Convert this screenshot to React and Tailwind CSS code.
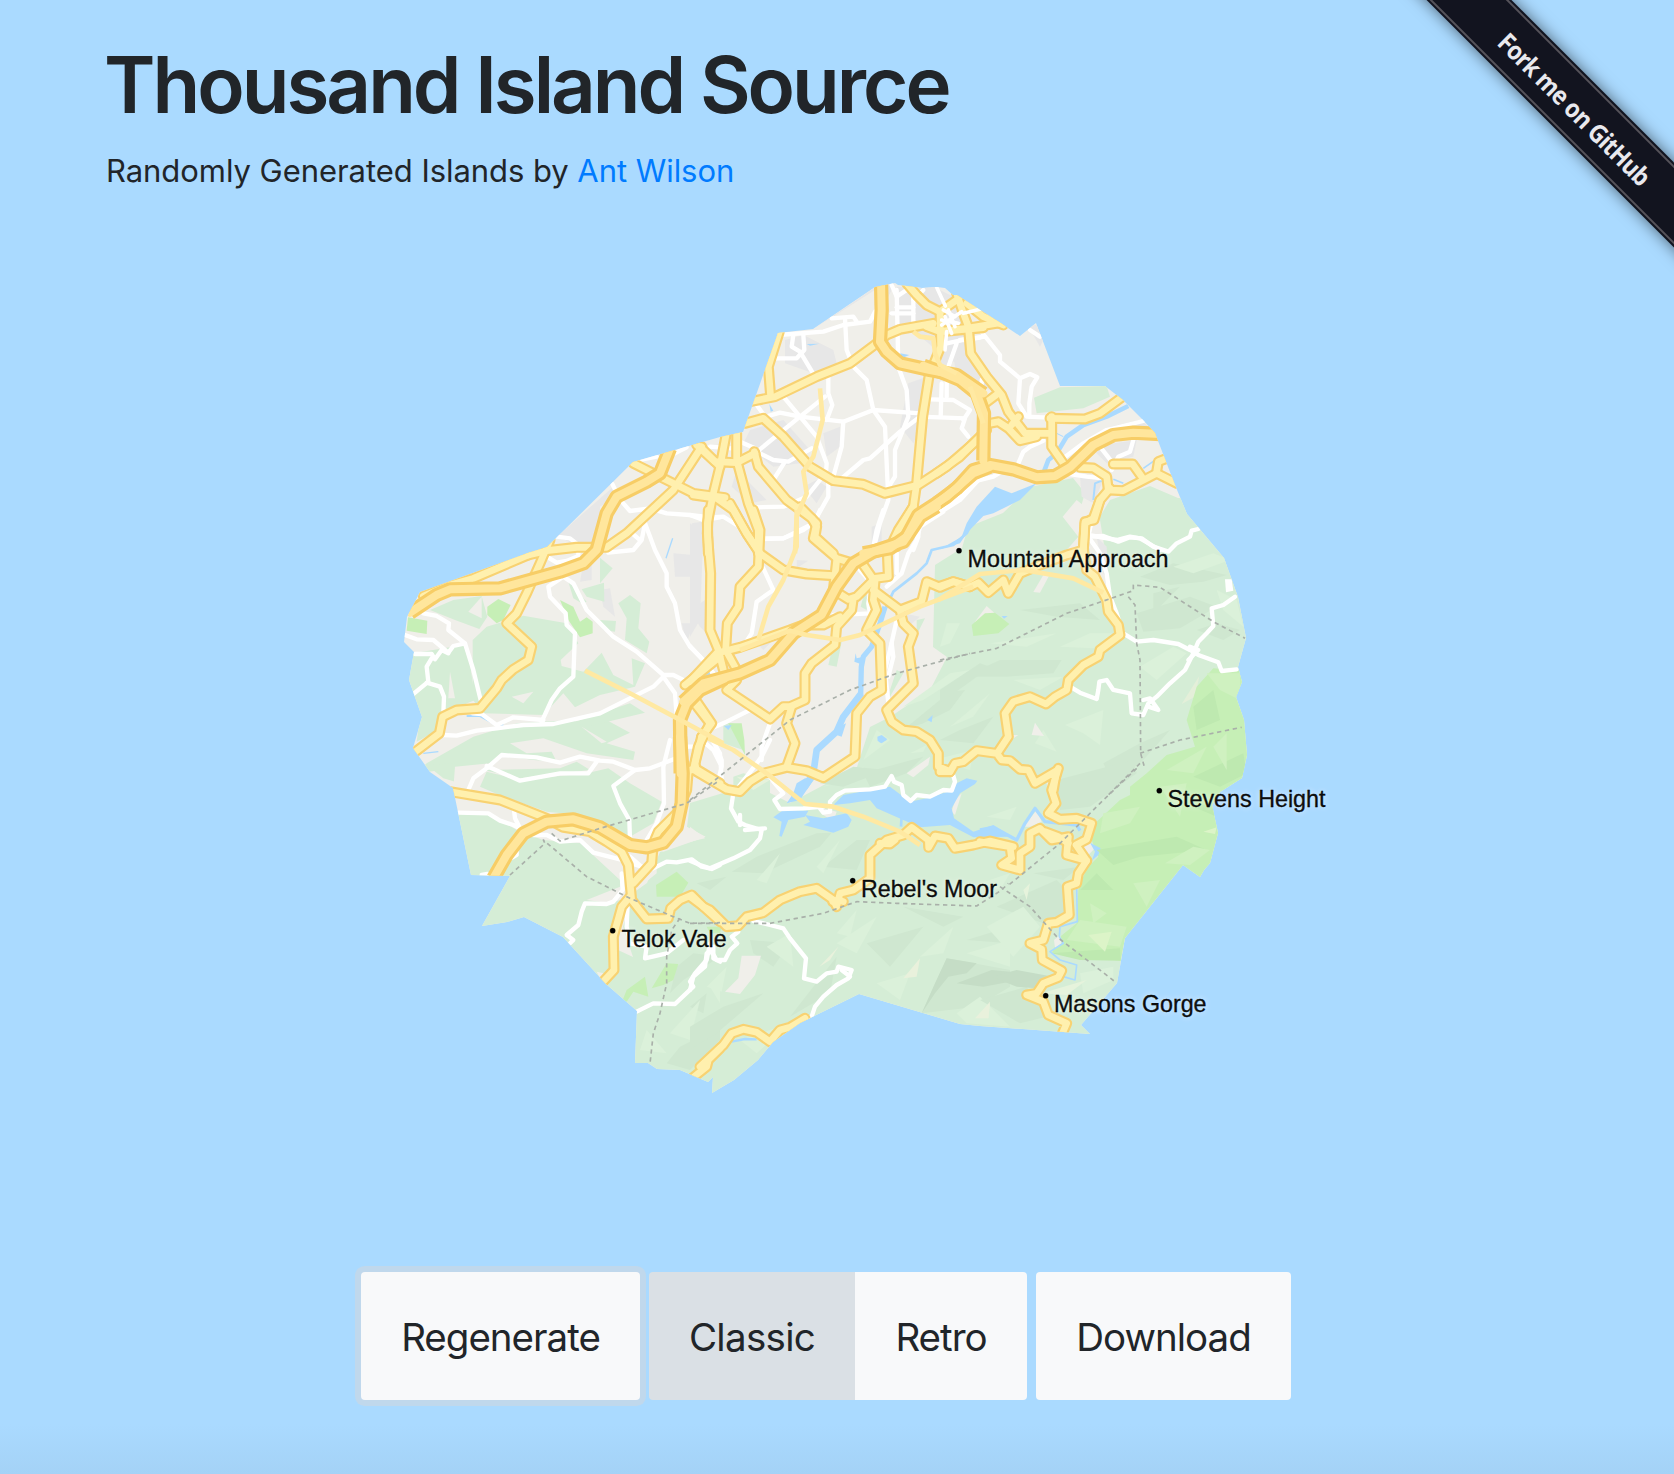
import React from "react";

// The map is drawn in sheets. Each sheet has an origin on the page and
// its own coordinates, three units to a pixel.
const ORIGIN = {
  A: "translate(700 270) scale(.33333)",
  B: "translate(940 270) scale(.33333)",
  C: "translate(400 430) scale(.33333)",
  D: "translate(690 510) scale(.33333)",
  E: "translate(940 500) scale(.33333)",
  F: "translate(400 740) scale(.33333)",
  G: "translate(690 740) scale(.33333)",
  H: "translate(980 740) scale(.33333)",
};

const COAST =
  "778,333 813,329 875,287 895,283 898,285 907,286 922,288 937,287 945,288 953,295 957,295 1002,324 1020,336 1036,323 1060,386 1105,386 1123,400 1143,420 1155,433 1175,485 1187,514 1198,527 1224,558 1238,597 1246,638 1238,667 1242,682 1236,697 1244,720 1247,755 1242,778 1220,792 1212,805 1218,833 1210,863 1204,870 1200,877 1183,865 1125,938 1117,983 1081,1025 1090,1034 980,1026 960,1024 859,994 800,1023 773,1042 758,1060 734,1080 712,1093 713,1077 708,1082 680,1070 657,1069 648,1063 635,1063 637,1011 606,984 563,937 524,917 507,922 482,926 510,876 471,875 453,788 430,772 413,748 422,717 409,680 414,652 404,642 407,617 420,592 528,553 547,547 633,462 720,437 743,432";

const GREEN_MAIN =
  "1260,500 1178,498 1150,486 1110,500 1093,528 1077,520 1085,493 1073,478 1030,487 1003,513 968,527 962,548 935,565 933,647 947,657 930,690 890,717 870,727 857,767 820,787 790,803 770,793 733,790 690,803 687,827 705,837 660,852 647,883 633,893 623,927 633,957 618,950 620,900 620,880 580,843 543,840 517,830 490,815 440,813 440,1110 1260,1110";

const URBAN = "#f0efea";
const GREEN = "#d5edd6";
const PARK = "#c6efb6";
const WATER = "#aadaff";
const GREY = "#e7e7e7";

const LAND = {
  A: [
    [GREY, "340,178 525,52 585,40 560,90 460,135 400,140"],
    [URBAN, "340,178 525,60 520,150 380,185"],
    [GREY, "255,210 310,195 400,240 410,280 340,310 255,280"],
    [GREY, "150,480 250,450 330,540 300,580 220,590 130,520"],
    [GREY, "370,490 420,470 420,530 380,560"],
    [GREY, "625,340 680,320 665,470 640,520 600,470"],
    [GREY, "110,600 200,690 150,700 95,650"],
    [GREY, "310,650 350,630 380,650 350,700"],
    [GREY, "590,50 700,50 770,90 720,250 650,190 590,180"],
    [GREY, "750,220 790,210 840,340 770,310"],
    [WATER, "320,222 358,221 330,227"],
    [WATER, "600,250 628,255 605,265"],
    [WATER, "208,402 220,422 212,425"],
  ],
  B: [
    [GREY, "0,60 60,90 80,250 0,300"],
    [GREY, "80,260 130,310 150,360 90,330"],
    [GREY, "260,160 290,165 310,210 300,230"],
    [GREY, "450,530 590,510 580,560 500,580"],
    [GREY, "510,470 600,450 640,480"],
    [GREY, "420,620 490,630 460,700 425,680"],
    [GREEN, "282,383 360,352 500,348 510,380 430,415 290,430"],
    [WATER, "165,650 215,670 290,640 240,690 160,730 130,738 80,790 60,820 0,838 65,800 80,760 110,710"],
  ],
  C: [
    [GREY, "470,320 640,170 670,220 600,250 590,350 520,340"],
    [URBAN, "600,230 660,190 700,240 640,320 600,340"],
    [GREY, "875,280 940,270 940,360 890,350"],
    [GREY, "820,370 880,375 870,440 825,440"],
    [GREY, "550,400 575,400 575,450 540,455"],
    [GREY, "600,480 630,475 645,560 610,530"],
    [GREY, "870,540 930,500 930,620 900,590"],
    [GREY, "845,580 880,580 860,640"],
    [GREEN, "90,540 160,510 245,498 262,560 238,597 165,570"],
    [URBAN, "205,545 245,500 245,565"],
    [GREEN, "218,630 260,590 370,557 500,580 535,640 482,690 485,708 550,725 605,668 640,735 700,765 695,685 735,700 705,770 600,795 525,832 490,790 430,855 330,852 250,850 215,805 218,750"],
    [GREEN, "40,670 190,645 210,700 225,810 130,850 105,905 50,935 60,860 20,760"],
    [URBAN, "150,725 165,805 145,805"],
    [URBAN, "335,800 400,785 370,820"],
    [GREEN, "655,520 690,495 722,520 715,595 748,635 740,670 675,630 680,565"],
    [GREEN, "600,383 638,415 600,460"],
    [GREEN, "545,478 612,458 613,515 560,500"],
    [GREEN, "505,455 560,515 545,520 520,505"],
    [GREEN, "600,570 648,573 645,605 610,600"],
    [GREEN, "50,1030 80,1000 220,920 350,880 520,870 605,940 620,935 520,875 610,865 690,908 620,940 705,965 700,990 560,970 430,925 330,940 380,970 455,965 470,995 400,990 300,975 250,1015 165,1015"],
    [GREEN, "525,875 690,820 735,848 560,890"],
    [PARK, "262,530 295,507 332,525 310,570 290,580 262,555"],
    [PARK, "24,562 82,572 80,612 20,602"],
    [PARK, "480,510 520,530 540,575 560,562 578,575 578,610 540,622 505,570"],
    [WATER, "915,722 930,720 928,745 912,742"],
  ],
  D: [
    [GREY, "0,40 40,70 30,330 0,380"],
    [GREY, "545,50 575,40 575,110 545,110"],
    [GREY, "320,150 355,152 320,175"],
    [GREY, "640,310 690,320 660,345"],
    [GREY, "190,390 260,380 220,420"],
    [GREEN, "430,400 455,395 440,470 415,465"],
    [GREEN, "680,330 705,325 680,375"],
    [GREEN, "520,260 530,245 530,300 512,290"],
    [GREEN, "600,540 620,480 640,490 600,560"],
    [GREEN, "100,640 130,640 160,720 100,700"],
    [GREEN, "130,800 160,790 240,810 240,850 130,850"],
    [PARK, "115,640 155,640 163,690 165,735"],
    [WATER, "102,648 125,645 115,660"],
    [WATER, "45,485 60,480 58,500 42,500"],
    [WATER, "497,430 500,445 520,440 520,465 493,455"],
    [WATER, "562,680 575,675 592,688 575,700 563,693"],
    [WATER, "712,630 728,615 725,637"],
    [WATER, "445,650 468,640 455,680 440,675"],
  ],
  E: [
    [URBAN, "410,0 435,20 470,0 490,120 510,290 470,250 440,110 415,110 368,50"],
    [GREY, "470,110 500,140 505,240 490,220"],
    [URBAN, "415,110 430,150 370,190 345,190"],
    [URBAN, "310,225 330,222 300,278 280,276"],
    [URBAN, "140,318 170,345 120,390 105,365"],
    [PARK, "95,375 135,340 165,338 208,372 175,400 100,408"],
    [WATER, "185,348 203,348 192,356"],
    [URBAN, "285,668 312,708 275,705"],
    [URBAN, "215,705 235,705 205,725"],
    [URBAN, "0,460 18,475 0,500"],
    ["#fff", "855,238 875,238 880,272 858,277"],
  ],
  F: [
    [GREEN, "240,140 260,95 360,120 560,100 625,85 690,130 785,185 760,250 690,290 620,260 540,225 440,215 310,170"],
    [GREEN, "80,75 165,70 165,125 130,115"],
    [GREEN, "250,90 480,85 530,65 570,90 360,115"],
    [URBAN, "165,80 270,70 220,130 200,160 160,145"],
    [URBAN, "660,300 770,290 770,400 720,440 690,380"],
    [URBAN, "860,260 917,290 790,335 770,330"],
    [URBAN, "560,480 660,440 660,480 630,490"],
    [PARK, "768,435 830,395 865,428 840,470 770,470"],
    [PARK, "668,780 680,750 735,710 745,770 700,755 680,785"],
    [PARK, "755,745 800,670 835,672 820,720 790,735"],
    [URBAN, "590,695 612,700 600,715"],
  ],
  G: [
    [URBAN, "0,260 45,295 0,305"],
    [URBAN, "650,100 720,50 715,75 670,112"],
    [URBAN, "155,647 213,647 195,705 150,762 105,755 145,715"],
    [URBAN, "380,200 440,215 430,245 400,225"],
    [URBAN, "795,180 815,160 795,225 785,215"],
    [PARK, "50,560 95,560 90,580 60,580"],
    ["#e5f2dc", "140,110 240,120 190,150"],
    ["#e9f1dc", "640,715 690,655 680,710"],
    ["#e9f1dc", "855,835 900,785 895,835"],
    ["#e9f1dc", "388,680 445,620 420,660"],
    [WATER, "310,160 320,130 345,115 375,115 350,150 330,180 290,190"],
    [WATER, "430,195 460,165 540,150 600,140 660,185 710,175 790,150 800,130 830,115 862,122 855,132 810,160 785,205 792,235 850,275 910,255 965,290 850,292 780,255 690,262 640,240 560,205 540,180 480,190"],
    [WATER, "345,225 400,235 470,220 485,240 475,260 430,278 340,255 360,245"],
    [WATER, "250,232 280,210 355,212 345,230 295,240 275,290 268,288 275,245"],
    [WATER, "565,0 590,0 570,8"],
  ],
  H: [
    [URBAN, "130,260 170,210 185,245 150,260"],
    [URBAN, "200,130 215,120 210,190"],
    [PARK, "645,20 620,-60 650,-160 700,-215 900,-200 900,150 720,430 435,595 422,662 215,640 240,590 290,550 295,450 320,385 355,350 335,300 350,245 420,180 450,165 450,140 500,100 560,45"],
    [URBAN, "310,320 330,308 345,325 325,345"],
    [WATER, "330,308 362,325 355,345 335,362 345,335"],
    [URBAN, "222,600 240,585 245,610 225,625"],
  ],
};

const DARK = "#cfe7d0";
const DARKER = "#c5ddc6";
const LIGHT = "#dbf1da";
const RELIEF = {
  D: [
    [DARK, "640,660 780,545 825,540 780,600 700,640"],
    [DARK, "520,790 700,740 650,790 540,830"],
    [LIGHT, "640,590 780,490 840,480 700,570"],
    [LIGHT, "520,750 560,660 600,690"],
    [LIGHT, "400,830 520,770 520,800"],
    [LIGHT, "660,730 710,705 700,725"],
  ],
  E: [
    [DARK, "70,530 180,480 365,480 340,520 200,530"],
    [DARK, "0,570 120,490 150,500 90,545 0,610"],
    [DARK, "590,340 750,290 830,320 720,385 610,395"],
    [DARK, "600,230 700,190 860,225 790,245 690,255"],
    [DARK, "490,790 600,730 690,690 610,780 520,850"],
    [DARK, "240,330 420,310 480,360 350,350"],
    [DARK, "640,280 720,260 640,340"],
    [DARK, "770,390 830,370 900,390 850,420"],
    [DARK, "0,720 60,690 160,650 100,730"],
    [LIGHT, "600,500 700,440 740,460 650,540"],
    [LIGHT, "375,675 490,630 480,735 430,700"],
    [LIGHT, "285,730 310,690 350,755"],
    [LIGHT, "20,370 60,370 30,430 0,440"],
    [LIGHT, "360,440 450,400 520,400 460,445"],
    [LIGHT, "150,430 350,400 260,440"],
    [LIGHT, "220,540 370,530 300,570"],
    [LIGHT, "700,200 820,160 870,180 760,220"],
    [LIGHT, "30,680 150,580 100,650"],
    [LIGHT, "830,270 890,300 910,380 850,330"],
    ["#e4efd9", "725,612 778,528 765,590"],
  ],
  F: [
    [DARK, "810,760 830,680 880,640 960,650 850,720"],
    [DARK, "840,920 960,860 960,900 870,990 800,970"],
    [DARK, "870,800 920,760 910,820"],
    [LIGHT, "720,930 740,870 800,940"],
    [LIGHT, "810,880 900,780 870,900"],
    [LIGHT, "930,740 960,700 960,790"],
  ],
  G: [
    [DARK, "125,395 200,350 380,280 425,278 390,320 220,400"],
    [DARK, "400,380 500,300 540,300 500,390"],
    [DARK, "20,430 110,410 60,450"],
    [DARK, "180,600 300,610 250,680 190,640"],
    [DARK, "530,610 700,560 600,680"],
    [DARK, "0,860 100,800 220,760 80,880 0,930"],
    [DARK, "640,500 820,530 760,560"],
    [DARK, "300,830 440,650 420,760"],
    [DARK, "830,600 960,560 960,610"],
    [DARK, "390,130 490,80 590,90 460,140"],
    [DARK, "770,655 960,690 960,740 860,800 695,820"],
    [DARKER, "770,655 860,670 830,700 775,710 735,760 695,820 735,730"],
    [DARKER, "800,730 905,690 960,695 960,725 880,740"],
    [LIGHT, "200,420 270,340 230,430"],
    [LIGHT, "380,380 450,300 400,400"],
    [LIGHT, "730,60 850,30 840,90"],
    [LIGHT, "230,620 300,580 310,680"],
    [LIGHT, "440,610 560,530 500,640"],
    [LIGHT, "560,730 660,700 630,780"],
    [LIGHT, "690,650 790,560 760,640"],
    [LIGHT, "830,640 960,600 960,680"],
    [LIGHT, "800,820 870,770 960,860 830,850"],
    [LIGHT, "150,900 300,850 200,940"],
    [LIGHT, "440,580 500,510 480,590"],
    [LIGHT, "50,740 110,680 95,755"],
  ],
  H: [
    [DARK, "50,500 230,420 260,450 250,530 190,550"],
    [DARK, "230,120 460,60 470,100 330,200 240,210"],
    [DARK, "160,400 300,380 250,420"],
    [DARK, "0,780 140,740 200,830 120,850"],
    [DARKER, "35,710 110,690 220,710 170,745 110,740"],
    [LIGHT, "20,560 130,500 180,560 100,650"],
    [LIGHT, "20,230 110,200 90,240"],
    [LIGHT, "300,700 400,680 400,720 310,760"],
    [LIGHT, "0,430 90,400 60,450"],
    ["#e6f3dc", "185,760 320,720 260,765"],
    ["#e6f3dc", "0,830 30,790 25,835"],
    ["#e6f3dc", "130,450 150,430 140,480"],
  ],
};

const PARK_RELIEF = {
  H: [
    ["#bee9b0", "350,330 590,290 680,330 480,350 400,375"],
    ["#bee9b0", "300,450 350,400 400,450"],
    ["#bee9b0", "640,110 790,40 800,100 720,140"],
    ["#bee9b0", "215,640 420,625 422,662 300,660"],
    ["#bee9b0", "640,-100 700,-150 720,-60 650,-30"],
    ["#bee9b0", "640,200 700,190 710,230"],
    ["#cff1c0", "370,220 480,200 450,250 360,280"],
    ["#cff1c0", "555,370 640,320 690,330 630,375"],
    ["#cff1c0", "330,490 380,520 340,550"],
    ["#cff1c0", "460,430 540,420 500,500"],
    ["#cff1c0", "560,90 680,20 640,100"],
    ["#cff1c0", "700,20 740,-20 740,90"],
    ["#cff1c0", "680,-200 780,-200 780,-120 720,-150"],
    ["#cff1c0", "540,140 620,130 600,230"],
    ["#cff1c0", "300,540 440,560 420,620 260,600"],
    ["#dcf4c8", "325,585 395,575 375,635"],
    ["#dcf4c8", "670,275 710,262 705,282"],
  ],
};

const RIVERS = {
  B: [["565,408 500,440 430,465 380,500 350,550 325,570 310,610", 14], ["490,630 465,640 460,690", 6], ["520,628 550,640", 5], ["610,595 660,560", 5], ["350,490 370,500", 3]],
  C: [["818,325 798,385", 4], ["200,858 240,858 285,882 310,884", 6], ["70,970 115,965", 4]],
  D: [["850,30 830,70 790,105 725,120 710,160 680,190 610,245 580,310", 8], ["585,290 570,340 545,410 520,440 514,470 512,555", 16], ["514,550 460,620 440,665 380,720 370,790 345,830 310,865", 20]],
  G: [["125,905 165,897 200,898", 7], ["635,225 633,260", 8]],
  H: [["0,270 40,262 110,300 135,250 165,205 195,245 290,255 300,272", 10], ["290,440 292,545 240,560 238,590 250,610 210,635 240,660 290,675 285,720 250,710", 5]],
};

const WHITE = {
  A: ["235,195 370,185 430,165 510,155 525,125", "395,145 460,140 470,155", "435,145 440,240 460,290 500,330 520,420 555,470 565,690 540,760 520,840", "280,195 275,230 300,245 345,320", "310,195 313,240 290,265 220,265", "385,320 385,370 397,405 380,450", "250,380 300,440 350,500 380,580 378,610", "165,550 300,440 375,380", "180,445 240,428 300,440 430,455 520,420 660,430", "430,455 425,530 400,620", "425,625 490,570 510,565 600,485 660,440", "160,540 220,570 265,575 335,535", "255,575 220,630", "165,712 250,710 320,680 360,630", "180,805 250,805 340,760 385,680 385,640", "590,60 595,290 620,360 625,440 585,540 585,620 560,660", "575,130 640,130", "640,60 640,180", "590,112 640,112", "575,45 590,80 620,60", "725,340 722,440", "660,440 795,445 785,475 805,500", "690,388 760,390 810,420 790,450", "740,330 740,380", "740,220 790,210 840,203", "770,220 745,290", "170,405 188,430", "120,515 165,535", "30,530 95,535", "640,90 670,60", "840,625 780,690 700,740 655,760 655,800 640,840"],
  B: ["120,180 180,255 180,275 240,325 235,400 260,440 325,443", "240,325 270,312 292,322 275,350 268,400 268,440", "270,180 300,200", "310,512 270,530 250,545 235,580", "370,565 430,520 500,480 610,453", "580,510 570,545 535,560 515,600", "480,530 515,575", "390,612 440,620 490,625", "0,720 50,685 100,635 160,620 185,605", "455,750 445,795 530,810 570,800 600,805 660,840", "60,210 135,200", "125,330 125,350"],
  C: ["470,320 510,325 535,345 535,378 500,393 470,398 440,380", "637,162 647,182", "720,90 770,80", "820,72 860,52", "668,218 690,243 750,235 800,250 870,255 910,270 960,262", "735,280 725,330 700,360 625,368", "690,305 720,330", "735,280 765,360 800,430 800,470 825,520 840,600 870,650 910,690 940,730", "490,440 445,470 450,500 497,550 500,585 525,610 520,740 480,775 455,810 425,875", "490,440 520,460 560,540 600,580 640,620 710,665 790,735 820,735 860,755", "790,740 760,770 700,800 600,850 460,882 370,885 290,895 230,902 170,917 130,915", "790,740 825,790 830,860", "70,550 110,558 147,580 145,600 195,640 220,720 242,810", "15,615 50,628 100,630 145,668 160,648 195,640", "45,672 95,672 105,688 125,660 145,670", "95,685 80,710 85,755 40,792", "80,758 120,770 132,800 130,850", "218,850 245,852 290,885 340,862 430,870"],
  D: ["0,15 60,22 100,20 140,45", "200,88 280,85 340,60 375,35 390,0", "580,0 560,60 550,110", "760,5 690,50 680,90 655,130 635,190 590,230", "620,110 620,190", "220,175 250,240 200,275 185,370 165,400", "0,408 30,440 70,490", "545,220 535,280 540,310 480,313", "510,180 540,215", "620,330 600,420 585,480 595,580", "605,400 610,440 595,500", "65,655 110,635 180,600", "240,640 215,710 215,750", "430,315 450,315", "60,680 90,730 95,810"],
  E: ["455,60 445,110 480,160 500,220 510,290 530,340 550,400 590,425 640,420 715,432 750,450 775,465 835,487 845,513 890,508", "445,110 490,108 535,125 570,112 605,115 640,140 685,155 710,130 750,110 755,92 775,87", "390,560 420,578 470,597 475,570 478,545 500,540 520,570 570,580 575,640 610,645 625,610 650,590 690,550 735,510 760,460 775,425 800,400 820,378 815,325 850,315 885,290", "610,600 630,595 655,630 625,620", "745,480 775,450 750,440"],
  F: ["205,150 220,115 260,85 305,45 410,52 480,68 540,50 600,62 640,65 705,90 750,85 790,70 840,50", "260,78 360,122 480,100 565,100 590,65", "705,90 640,138 660,190 688,240 690,300", "810,0 790,80 792,190 770,250 740,300", "175,218 265,220 300,242 340,255 400,285 440,285 480,305 540,300 580,338 660,358 740,385", "342,210 345,235 360,265", "325,360 350,345 350,335", "740,395 800,365 830,367 875,358 905,380 935,387 960,375", "690,350 730,385", "665,400 668,450 640,485 620,492 555,490 545,515 535,555 500,585 520,600 510,610", "683,490 680,560 690,610 740,620 735,655 800,640 850,600", "930,610 920,660 885,700 870,725 880,740 825,792 760,790 740,800 710,815", "245,405 262,402", "865,20 890,20", "905,0 940,30 960,70", "940,620 940,655 960,665"],
  G: ["240,0 215,50 170,110 130,160 123,205 145,245 165,255 215,270 210,295 180,330 130,355 60,385 30,375 0,362", "165,270 225,265", "150,225 150,255", "70,0 95,60 95,80 85,120", "235,100 250,125 280,160 253,180 270,207 340,205 400,200", "390,205 400,218 420,215 420,185 440,165 465,152 540,148 585,140 605,108 612,125 635,135 640,165 662,183 680,165 720,170 760,150 785,152 795,125 788,100", "190,543 240,555 280,565 300,595 348,655 342,715 380,725 410,700 440,695 445,680 485,690 475,715 440,735 400,770 375,800 365,830 345,835", "455,690 480,710", "0,750 10,710 45,680 50,640 65,635 80,660 105,660 120,630 142,610 125,590 145,575"],
};

// Street grid that lies over the avenues of the northern town.
const WHITE_TOP = {
  A: ["745,120 765,170", "725,165 785,125", "735,140 755,190", "730,120 765,140", "725,150 775,160", "710,52 736,108", "790,130 840,118", "740,185 735,240"],
};

const SECOND = {
  A: ["238,185 205,290 212,380", "150,395 225,380 350,320 450,280 530,220 560,195 600,178 700,160", "135,460 190,445 250,500 330,590 400,632 490,643 555,670 655,645 740,590 850,495", "690,300 668,440 657,560 650,640 640,710 610,760 590,830", "-10,525 45,575 110,578 165,550", "80,485 62,580 40,670 22,760 25,850", "110,490 110,570 145,700 175,780 175,850", "163,545 175,590 260,690 335,745 350,770 345,800 400,850", "-20,675 50,685 100,720 140,790 180,850", "620,40 650,75 680,105 720,125 770,90", "720,125 722,230 690,310", "680,170 720,185 850,173"],
  B: ["50,70 70,130 85,170 92,250 140,320 185,375 205,425 255,490 330,490", "0,185 80,175 200,155", "80,100 130,140 190,165", "135,400 175,370", "150,460 175,455 205,475 240,512 290,500", "235,440 215,465", "-10,610 60,560 140,480", "330,445 435,447 480,430 545,382", "335,440 335,530 370,580", "420,592 460,594 500,620 505,660 550,662 650,610 710,640", "520,582 578,582 605,620", "650,605 655,575 680,565", "510,655 480,690 462,750 435,755 430,840"],
  C: ["70,498 150,465 220,445 385,375", "385,375 440,362 530,352 620,352 680,310 820,180 905,50", "700,100 780,140 880,190 975,203", "450,330 420,400 380,490 350,550 320,580 395,650 385,690 340,718 305,750 290,775 240,835 170,840 128,860 118,910 40,970", "855,765 960,680", "880,815 930,880 895,950 880,1020", "900,50 960,110"],
  D: ["55,0 52,70 62,190 60,360 85,420 100,480", "190,0 210,60 205,170 150,230 145,290 112,340 107,420 140,480 140,510 110,540 240,627 280,590 300,590 345,570 345,490 365,460 435,405 440,350 485,300 490,265", "120,-20 170,70 210,130 280,180 350,192 430,197", "330,-10 380,40 370,85 440,145 490,160", "440,150 430,240 475,268 500,260 555,205 595,200 592,130 625,60 670,-10", "520,165 555,215 550,270 560,300 530,360 570,400 575,540 540,560 500,610 495,740 400,803 350,782 290,772 220,790 180,815 150,845 110,838 20,785 15,760 35,680", "305,590 290,640 315,700 290,770", "10,560 65,640 35,680", "550,240 630,300 640,340 670,370 655,410 670,520 590,600 605,635 640,660 680,665 720,690 745,730 745,770 780,785", "630,300 695,275 710,215 745,230 790,215 840,230", "0,515 80,430 150,412 300,360 340,345 400,345 450,320"],
  E: ["0,262 40,245 90,260 115,248 145,278 190,240 205,280 240,220 300,195 380,165 430,150", "480,0 460,55 435,70 430,150 440,210 465,230 500,300 505,335 535,375 540,405 480,450 475,470 430,495 385,540 380,570 345,590 318,612 270,590 220,605 195,640 205,710 175,755", "0,815 30,815 45,790 70,785 110,752 170,760 185,780 210,782 240,808 265,810 285,850 350,812 340,870"],
  F: ["150,155 300,180 440,235 490,262 570,275 620,305 665,335 685,375 695,480 740,537 805,535 812,505 840,480 875,465 910,500 960,545", "865,90 860,150 830,220 775,275 760,310 755,370 700,430", "690,470 665,500 640,590 642,690 605,730", "860,95 885,85 960,130", "870,1020 920,980 925,960 960,925"],
  G: ["0,470 40,500 60,510 110,560 145,557 170,530 220,518 270,480 330,455 380,445 430,480 440,500 450,460 490,450 540,415 540,345 590,300 640,285 665,262 715,300 716,322 735,288 775,295 795,325 850,315 900,303 970,320", "428,485 445,480 460,485", "570,310 600,312 615,300", "30,980 100,915 125,880 160,868 200,877 240,905 270,870 300,862 345,835"],
  H: ["235,85 215,150 228,190 205,220 240,238 290,235 335,250 320,298 288,315 320,362 295,400 290,430 262,440 268,525 230,547 205,550 190,600 150,610 185,628 187,660 245,692 235,712 190,730 170,760 140,765 190,785 205,825 260,850 245,885", "0,305 90,320 95,355 65,375 120,390 120,340 150,320 150,280 180,265 215,300 265,290 260,345 320,362", "195,275 235,290 265,310"],
};

const MAJOR = {
  A: ["543,30 545,120 540,215 560,245 600,280 690,300 770,315 850,370", "870,590 820,610 740,680 655,735 620,800 570,835 490,850"],
  B: ["-50,287 0,305 60,330 110,370 132,430 130,572", "660,492 580,488 520,495 460,525 390,592 345,618 290,622 220,598 150,585 100,600 50,655 -10,700"],
  C: ["810,55 780,130 740,155 650,200 620,250 590,360 550,400 480,425 300,475 150,478 110,495 30,548", "975,745 900,780 860,820 840,870 842,1030"],
  D: ["740,-10 690,20 640,95 550,125 490,160 440,230 395,315 310,370 240,450 150,490 40,520 -20,575"],
  F: ["840,-10 848,100 845,190 830,260 790,308 740,322 690,315 600,262 520,238 440,245 370,280 320,345 280,415"],
};

const THIN = {
  A: ["360,355 368,450 340,560 310,605 320,670 290,740 285,850", "640,185 660,200 700,205 705,250 720,285 770,310"],
  B: ["90,350 130,460"],
  C: ["555,722 700,795 860,880 970,940"],
  D: ["320,0 320,110 280,210 235,290 205,390", "150,420 300,362 350,375 450,390 510,375 690,290 850,230"],
  E: ["-5,300 120,222 250,210 400,235 490,278"],
  G: ["55,-5 130,30 230,100 345,192 430,200 520,230 630,275 690,315"],
};

const BORDERS = {
  D: ["0,870 150,750 300,630 480,540 620,490 840,430"],
  E: ["0,480 170,445 380,340 470,310 580,272 580,255 660,262 820,365 915,415", "565,290 585,315 590,430 600,480 602,760 615,808", "600,760 720,720 905,682", "600,790 500,890"],
  F: ["455,280 480,303 600,265 860,190 960,120", "330,405 435,310 430,300 560,410 690,475 820,530 870,550 960,548", "840,535 815,570 800,650 800,730 780,820 760,880 750,970"],
  G: ["0,550 240,550 400,520 500,485 620,490 860,498 935,450 955,430"],
  H: ["470,85 360,190 240,310 80,440", "60,440 150,500 230,590 405,725"],
};

const LABELS = [
  { name: "Mountain Approach", x: 967.5, y: 567, w: 201, dx: 959, dy: 550.7 },
  { name: "Stevens Height", x: 1167.5, y: 807, w: 158, dx: 1159.3, dy: 790.7 },
  { name: "Rebel's Moor", x: 861, y: 897, w: 136, dx: 852.7, dy: 880.7 },
  { name: "Telok Vale", x: 621.5, y: 947, w: 105, dx: 612.7, dy: 930.7 },
  { name: "Masons Gorge", x: 1054, y: 1012, w: 152.5, dx: 1045.7, dy: 995.7 },
];

function Areas({ data }) {
  return Object.entries(data).map(([key, list]) => (
    <g key={key} transform={ORIGIN[key]}>
      {list.map(([fill, points], i) => (
        <polygon key={i} points={points} fill={fill} />
      ))}
    </g>
  ));
}

function Lines({ data, color, width, dash, cap = "round" }) {
  return Object.entries(data).map(([key, list]) => (
    <g key={key} transform={ORIGIN[key]} fill="none" stroke={color} strokeWidth={width} strokeDasharray={dash} strokeLinecap={cap} strokeLinejoin="round">
      {list.map((points, i) => (
        <polyline key={i} points={points} />
      ))}
    </g>
  ));
}

function IslandMap() {
  return (
    <svg viewBox="0 250 1674 1022" className="block h-[1022px] w-[1674px]">
      <defs>
        <clipPath id="coast">
          <polygon points={COAST} />
        </clipPath>
      </defs>
      <g clipPath="url(#coast)">
        <rect x="400" y="270" width="860" height="840" fill={URBAN} />
        <polygon points={GREEN_MAIN} fill={GREEN} />
        <Areas data={RELIEF} />
        <Areas data={LAND} />
        <Areas data={PARK_RELIEF} />
        {Object.entries(RIVERS).map(([key, list]) => (
          <g key={key} transform={ORIGIN[key]} fill="none" stroke={WATER} strokeLinejoin="round">
            {list.map(([points, w], i) => (
              <polyline key={i} points={points} strokeWidth={w} />
            ))}
          </g>
        ))}
        <Lines data={WHITE} color="#fff" width={13} />
        <Lines data={SECOND} color="#f8d272" width={33} />
        <Lines data={SECOND} color="#fff0ae" width={20} />
        <Lines data={MAJOR} color="#f7cd66" width={43} cap="butt" />
        <Lines data={MAJOR} color="#ffe69c" width={24} />
        <Lines data={THIN} color="#ffe9a2" width={14} cap="butt" />
        <Lines data={WHITE_TOP} color="#fff" width={11} />
        <Lines data={BORDERS} color="#a9b0a9" width={5} dash="13 11" cap="butt" />
      </g>
      <g className="fill-black stroke-black font-['Liberation_Sans',Arial,sans-serif] text-[24px] [stroke-width:0.3px] [text-shadow:0_0_6px_rgba(255,255,255,0.6)]">
        {LABELS.map((l) => (
          <g key={l.name}>
            <circle cx={l.dx} cy={l.dy} r="2.6" />
            <text x={l.x} y={l.y} textLength={l.w} lengthAdjust="spacingAndGlyphs">
              {l.name}
            </text>
          </g>
        ))}
      </g>
    </svg>
  );
}

const BUTTON = "h-32 bg-[#f8f9fa] pt-[3px] text-center text-[38.5px] leading-none tracking-[-1px] whitespace-nowrap";

export default function App() {
  return (
    <div className="relative flex h-[1474px] w-[1674px] flex-col overflow-hidden bg-[#aadaff] font-['Inter',sans-serif] text-[#212529]">
      <header className="h-[250px] pl-[106px] pt-[37px]">
        <h1 className="-ml-[2px] text-[78px] leading-[96px] font-[560] tracking-[-3px] whitespace-nowrap">Thousand Island Source</h1>
        <p className="mt-[14px] text-[31px] leading-[48px] tracking-[-0.05px] whitespace-nowrap">
          Randomly Generated Islands by{" "}
          <a href="#" className="text-[#007bff]">
            Ant Wilson
          </a>
        </p>
      </header>

      <IslandMap />

      <div className="flex pl-[361px]">
        <button className={`${BUTTON} w-[279px] rounded-[4px] shadow-[0_0_0_6px_#c0d8ec]`}>Regenerate</button>
        <div className="ml-[9px] flex overflow-hidden rounded-[4px]">
          <button className="h-32 w-[206px] bg-[#dae0e5] pt-[3px] text-center text-[38.5px] leading-none tracking-[-0.7px]">Classic</button>
          <button className={`${BUTTON} w-[172px]`}>Retro</button>
        </div>
        <button className={`${BUTTON} ml-[9px] w-[255px] rounded-[4px]`}>Download</button>
      </div>
      <div className="mt-auto h-[50px] shrink-0 bg-gradient-to-b from-[#aadaff] to-[#a4d2f6]" />

      <a
        href="#"
        className="absolute top-[73px] left-[1322px] flex h-[60px] w-[500px] rotate-45 flex-col justify-between bg-[#12141f] py-[2px] shadow-[0_0_16px_rgba(0,0,0,0.55)]"
      >
        <span className="block h-[2px] bg-[#55535a]" />
        <span className="translate-x-[6px] translate-y-[2px] scale-x-90 text-center font-['Noto_Sans',sans-serif] text-[25.5px] leading-[40px] font-bold tracking-[-0.8px] whitespace-nowrap text-[#e9e9ee]">
          Fork me on GitHub
        </span>
        <span className="block h-[2px] bg-[#55535a]" />
      </a>
    </div>
  );
}
